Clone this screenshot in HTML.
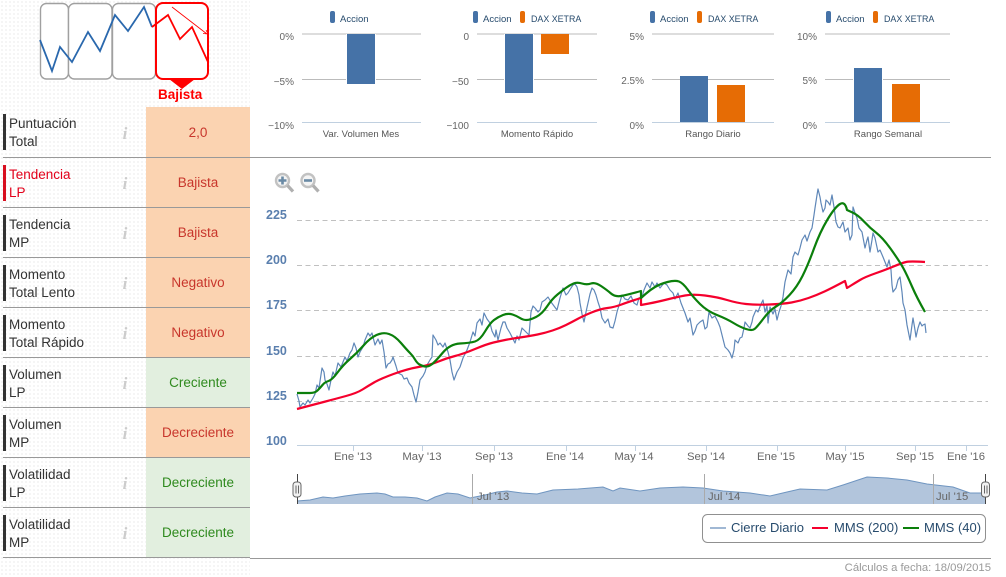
<!DOCTYPE html>
<html lang="es">
<head>
<meta charset="utf-8">
<title>Análisis</title>
<style>
html,body{margin:0;padding:0;background:#fff;width:1006px;height:577px;overflow:hidden}
svg{display:block;position:absolute;left:0;top:0}
text{font-family:"Liberation Sans",sans-serif}
.lab{font-size:13.5px;fill:#333}
.val{font-size:13.5px;text-anchor:middle}
.r{fill:#c8362c}
.g{fill:#2f8a1e}
.inf{font-family:"Liberation Serif",serif;font-style:italic;font-weight:bold;font-size:17px;fill:#ccc;text-anchor:middle}
.ax{font-size:10px;fill:#666;text-anchor:end}
.cat{font-size:9.5px;fill:#555;text-anchor:middle}
.lg{font-size:9.5px;fill:#274b6d}
.dx{font-size:8.9px;fill:#274b6d}
.yl{font-size:12.5px;font-weight:bold;fill:#5a7fae}
.xl{font-size:11.3px;fill:#666;text-anchor:middle}
.nl{font-size:11.3px;fill:#666}
.ll{font-size:13px;fill:#274b6d}
</style>
</head>
<body>
<svg width="1006" height="577" viewBox="0 0 1006 577" xmlns="http://www.w3.org/2000/svg">
<defs>
<pattern id="dots" width="4" height="4" patternUnits="userSpaceOnUse"><rect width="4" height="4" fill="#fff"/><rect x="1" y="1" width="2" height="2" fill="#f5f5f5"/></pattern>
</defs>
<rect x="0" y="0" width="250" height="577" fill="url(#dots)"/>

<!-- top trend icon -->
<g fill="#fff" stroke="#a0a0a0" stroke-width="1.4">
<rect x="40.5" y="3.5" width="28" height="75.5" rx="6"/>
<rect x="68.5" y="3.5" width="43.5" height="75.5" rx="6"/>
<rect x="112.5" y="3.5" width="43" height="75.5" rx="6"/>
</g>
<rect x="156" y="3" width="52" height="76" rx="7" fill="#fff" stroke="#f00" stroke-width="2"/>
<polygon points="169,79 195,79 182,89" fill="#f00"/>
<polyline points="40,40 52,71 60,47 72,62 88,32 100,51 115,15 128,31 144,7 152,27" fill="none" stroke="#2a68ad" stroke-width="1.8"/>
<polyline points="152,27 168,15 180,39 192,27 208,62" fill="none" stroke="#f00" stroke-width="1.8"/>
<path d="M172 7 L207 34 M203 33.5 L208 34 L206 30" fill="none" stroke="#f00" stroke-width="0.8"/>
<text x="158" y="99" font-weight="bold" fill="#f00" style="font-size:13.5px">Bajista</text>

<!-- table -->
<g>
<rect x="146" y="107" width="104" height="50" fill="#fbd3b1"/>
<rect x="146" y="157" width="104" height="50" fill="#fbd3b1"/>
<rect x="146" y="207" width="104" height="50" fill="#fbd3b1"/>
<rect x="146" y="257" width="104" height="50" fill="#fbd3b1"/>
<rect x="146" y="307" width="104" height="50" fill="#fbd3b1"/>
<rect x="146" y="357" width="104" height="50" fill="#e2efdf"/>
<rect x="146" y="407" width="104" height="50" fill="#fbd3b1"/>
<rect x="146" y="457" width="104" height="50" fill="#e2efdf"/>
<rect x="146" y="507" width="104" height="50" fill="#e2efdf"/>
</g>
<g fill="#999">
<rect x="3" y="157" width="247" height="1"/>
<rect x="3" y="207" width="247" height="1"/>
<rect x="3" y="257" width="247" height="1"/>
<rect x="3" y="307" width="247" height="1"/>
<rect x="3" y="357" width="247" height="1"/>
<rect x="3" y="407" width="247" height="1"/>
<rect x="3" y="457" width="247" height="1"/>
<rect x="3" y="507" width="247" height="1"/>
<rect x="3" y="557" width="247" height="1"/>
</g>
<g fill="#333">
<rect x="3" y="114" width="3" height="36"/>
<rect x="3" y="215" width="3" height="36"/>
<rect x="3" y="265" width="3" height="36"/>
<rect x="3" y="315" width="3" height="36"/>
<rect x="3" y="365" width="3" height="36"/>
<rect x="3" y="415" width="3" height="36"/>
<rect x="3" y="465" width="3" height="36"/>
<rect x="3" y="515" width="3" height="36"/>
</g>
<rect x="3" y="165" width="3" height="36" fill="#d80f20"/>

<text class="lab" x="9" y="128">Puntuación</text><text class="lab" x="9" y="146">Total</text>
<text class="lab" x="9" y="179" style="fill:#e2001a">Tendencia</text><text class="lab" x="9" y="197" style="fill:#e2001a">LP</text>
<text class="lab" x="9" y="229">Tendencia</text><text class="lab" x="9" y="247">MP</text>
<text class="lab" x="9" y="279">Momento</text><text class="lab" x="9" y="297">Total Lento</text>
<text class="lab" x="9" y="329">Momento</text><text class="lab" x="9" y="347">Total Rápido</text>
<text class="lab" x="9" y="379">Volumen</text><text class="lab" x="9" y="397">LP</text>
<text class="lab" x="9" y="429">Volumen</text><text class="lab" x="9" y="447">MP</text>
<text class="lab" x="9" y="479">Volatilidad</text><text class="lab" x="9" y="497">LP</text>
<text class="lab" x="9" y="529">Volatilidad</text><text class="lab" x="9" y="547">MP</text>

<text class="inf" x="125" y="139">i</text>
<text class="inf" x="125" y="189">i</text>
<text class="inf" x="125" y="239">i</text>
<text class="inf" x="125" y="289">i</text>
<text class="inf" x="125" y="339">i</text>
<text class="inf" x="125" y="389">i</text>
<text class="inf" x="125" y="439">i</text>
<text class="inf" x="125" y="489">i</text>
<text class="inf" x="125" y="539">i</text>

<text class="val r" x="198" y="137">2,0</text>
<text class="val r" x="198" y="187">Bajista</text>
<text class="val r" x="198" y="237">Bajista</text>
<text class="val r" x="198" y="287">Negativo</text>
<text class="val r" x="198" y="337">Negativo</text>
<text class="val g" x="198" y="387">Creciente</text>
<text class="val r" x="198" y="437">Decreciente</text>
<text class="val g" x="198" y="487">Decreciente</text>
<text class="val g" x="198" y="537">Decreciente</text>

<!-- horizontal rules -->
<rect x="250" y="157" width="741" height="1" fill="#999"/>
<rect x="250" y="558" width="741" height="1" fill="#999"/>

<!-- bar chart 1 -->
<g>
<rect x="302" y="33.5" width="119" height="1" fill="#bbb"/><rect x="302" y="79" width="119" height="1" fill="#bbb"/><rect x="302" y="122" width="119" height="1" fill="#c0d0e0"/>
<rect x="346" y="34" width="30" height="51" fill="#fff"/><rect x="347" y="34" width="28" height="50" fill="#4572a7"/>
<rect x="330" y="11" width="5" height="12" rx="2" fill="#4572a7"/><text class="lg" x="340" y="22">Accion</text>
<text class="ax" x="294" y="40">0%</text><text class="ax" x="294" y="85">−5%</text><text class="ax" x="294" y="129">−10%</text>
<text class="cat" x="361" y="137">Var. Volumen Mes</text>
</g>
<!-- bar chart 2 -->
<g>
<rect x="477" y="33.5" width="120" height="1" fill="#bbb"/><rect x="477" y="79" width="120" height="1" fill="#bbb"/><rect x="477" y="122" width="120" height="1" fill="#c0d0e0"/>
<rect x="504" y="34" width="30" height="60" fill="#fff"/><rect x="505" y="34" width="28" height="59" fill="#4572a7"/>
<rect x="541" y="34" width="28" height="20" fill="#e66c05"/>
<rect x="473" y="11" width="5" height="12" rx="2" fill="#4572a7"/><text class="lg" x="483" y="22">Accion</text>
<rect x="520" y="11" width="5" height="12" rx="2" fill="#e66c05"/><text class="dx" x="531" y="22">DAX XETRA</text>
<text class="ax" x="469" y="40">0</text><text class="ax" x="469" y="85">−50</text><text class="ax" x="469" y="129">−100</text>
<text class="cat" x="537" y="137">Momento Rápido</text>
</g>
<!-- bar chart 3 -->
<g>
<rect x="652" y="33.5" width="122" height="1" fill="#bbb"/><rect x="652" y="79" width="122" height="1" fill="#bbb"/><rect x="652" y="122" width="122" height="1" fill="#c0d0e0"/>
<rect x="680" y="76" width="28" height="46" fill="#4572a7"/>
<rect x="717" y="85" width="28" height="37" fill="#e66c05"/>
<rect x="650" y="11" width="5" height="12" rx="2" fill="#4572a7"/><text class="lg" x="660" y="22">Accion</text>
<rect x="697" y="11" width="5" height="12" rx="2" fill="#e66c05"/><text class="dx" x="708" y="22">DAX XETRA</text>
<text class="ax" x="644" y="40">5%</text><text class="ax" x="644" y="84">2.5%</text><text class="ax" x="644" y="129">0%</text>
<text class="cat" x="713" y="137">Rango Diario</text>
</g>
<!-- bar chart 4 -->
<g>
<rect x="825" y="33.5" width="125" height="1" fill="#bbb"/><rect x="825" y="79" width="125" height="1" fill="#bbb"/><rect x="825" y="122" width="125" height="1" fill="#c0d0e0"/>
<rect x="853" y="67" width="30" height="55" fill="#fff"/><rect x="854" y="68" width="28" height="54" fill="#4572a7"/>
<rect x="892" y="84" width="28" height="38" fill="#e66c05"/>
<rect x="826" y="11" width="5" height="12" rx="2" fill="#4572a7"/><text class="lg" x="836" y="22">Accion</text>
<rect x="873" y="11" width="5" height="12" rx="2" fill="#e66c05"/><text class="dx" x="884" y="22">DAX XETRA</text>
<text class="ax" x="817" y="40">10%</text><text class="ax" x="817" y="84">5%</text><text class="ax" x="817" y="129">0%</text>
<text class="cat" x="888" y="137">Rango Semanal</text>
</g>

<!-- zoom icons -->
<g fill="none">
<circle cx="282.5" cy="180.5" r="6.5" fill="#f4f4f4" stroke="#c2c2c2" stroke-width="2.4"/>
<path d="M287.5 185.5 L293 191.5" stroke="#b0b0b0" stroke-width="3.2"/>
<path d="M278.5 180.5 H286.5 M282.5 176.5 V184.5" stroke="#6a8aa5" stroke-width="2.6"/>
<circle cx="308" cy="180.5" r="6.5" fill="#f4f4f4" stroke="#c2c2c2" stroke-width="2.4"/>
<path d="M313 185.5 L318.5 191.5" stroke="#b0b0b0" stroke-width="3.2"/>
<path d="M304 180.5 H312" stroke="#6a8aa5" stroke-width="2.6"/>
</g>

<!-- main chart grid -->
<g stroke="#c0c0c0" stroke-width="1" stroke-dasharray="5,3.5">
<path d="M297 220.5 H988"/><path d="M297 265.5 H988"/><path d="M297 310.5 H988"/><path d="M297 356.5 H988"/><path d="M297 401.5 H988"/>
</g>
<rect x="297" y="445" width="691" height="1" fill="#c0d0e0"/>
<g fill="#c0d0e0">
<rect x="353" y="446" width="1" height="5"/><rect x="422" y="446" width="1" height="5"/><rect x="494" y="446" width="1" height="5"/><rect x="566" y="446" width="1" height="5"/><rect x="635" y="446" width="1" height="5"/><rect x="706" y="446" width="1" height="5"/><rect x="777" y="446" width="1" height="5"/><rect x="845" y="446" width="1" height="5"/><rect x="915" y="446" width="1" height="5"/><rect x="966" y="446" width="1" height="5"/>
</g>
<text class="yl" x="266" y="219">225</text>
<text class="yl" x="266" y="264">200</text>
<text class="yl" x="266" y="309">175</text>
<text class="yl" x="266" y="355">150</text>
<text class="yl" x="266" y="400">125</text>
<text class="yl" x="266" y="445">100</text>
<text class="xl" x="353" y="460">Ene '13</text>
<text class="xl" x="422" y="460">May '13</text>
<text class="xl" x="494" y="460">Sep '13</text>
<text class="xl" x="565" y="460">Ene '14</text>
<text class="xl" x="634" y="460">May '14</text>
<text class="xl" x="706" y="460">Sep '14</text>
<text class="xl" x="776" y="460">Ene '15</text>
<text class="xl" x="845" y="460">May '15</text>
<text class="xl" x="915" y="460">Sep '15</text>
<text class="xl" x="966" y="460">Ene '16</text>

<!-- series -->
<polyline fill="none" stroke="#5f87b8" stroke-width="1.2" stroke-linejoin="round" points="297,394 299,401 300,407 303,403 305,405 308,400 310,403 313,398 315,394 317,385 319,388 322,368 324,372 325,380 327,384 329,390 331,380 333,372 335,376 338,363 341,367 345,357 347,361 350,353 352,350 354,343 356,348 358,357 360,352 363,347 365,340 368,333 370,336 372,333 374,341 375,345 378,339 380,344 382,340 384,352 386,368 388,364 390,363 392,360 393,357 396,366 398,373 402,375 404,379 407,378 409,383 412,387 414,395 416,402 418,392 420,380 423,376 425,372 427,365 430,360 432,357 433,335 436,340 438,345 440,343 443,347 445,343 448,352 450,360 452,372 454,380 457,372 460,367 463,358 467,350 470,342 473,332 475,336 477,323 480,319 482,325 484,313 487,319 490,323 492,331 495,337 496,330 498,340 501,328 503,322 505,322 507,328 510,333 512,337 515,343 517,336 519,340 522,328 525,331 529,335 531,312 533,306 535,308 538,312 540,310 542,302 545,300 548,297 551,302 554,306 557,310 560,298 563,288 566,295 568,293 571,288 573,285 575,284 577,287 579,295 580,303 582,314 584,322 586,312 588,303 590,294 592,288 594,290 596,295 598,302 600,308 602,318 605,323 608,319 610,327 613,328 615,321 617,312 620,302 622,295 625,299 628,300 631,296 634,303 637,305 639,298 642,297 644,290 647,283 650,288 652,282 655,287 657,283 660,288 664,283 667,285 670,290 673,293 675,299 678,293 681,303 685,313 688,322 690,318 693,335 695,331 697,325 700,322 703,320 705,329 707,327 709,312 712,318 715,316 718,322 720,327 722,335 725,347 728,350 730,353 732,358 734,350 735,340 738,343 740,338 742,337 744,328 745,322 748,326 750,328 752,322 753,317 756,310 758,312 761,304 763,300 765,312 767,306 768,323 770,307 773,314 775,309 777,320 779,312 781,306 783,297 785,282 788,270 791,274 793,257 795,252 798,255 800,248 802,240 805,235 807,241 810,232 812,228 814,215 815,208 817,195 818,189 820,197 821,203 823,212 825,208 826,200 828,202 830,205 832,195 834,207 836,222 838,227 840,228 843,222 845,232 848,228 850,240 852,235 853,207 855,213 857,218 859,228 862,232 865,248 867,240 868,237 870,252 872,240 873,233 875,238 878,252 880,250 883,257 885,262 887,267 889,260 891,270 892,285 893,292 896,288 898,280 900,277 902,292 903,303 905,310 907,325 910,340 912,325 913,318 915,330 916,337 918,328 920,322 922,326 923,325 925,324 926,333"/>
<path fill="none" stroke="#f5002d" stroke-width="2.2" stroke-linejoin="round" d="M297 409 L306.5 406.5 Q316 404 325.5 401.5 Q335 399 346 396 Q357 393 362.5 389.5 Q368 386 374 382.5 Q380 379 393.5 374 Q407 369 418.5 367 Q430 365 438.5 361.5 Q447 358 455 356 Q463 354 475 349 Q487 344 493.5 342.5 Q500 341 505 340 Q510 339 520 337.5 Q530 336 537.5 334.5 Q545 333 552.5 330.5 Q560 328 566 325 Q572 322 577.5 319 Q583 316 591.5 312.5 Q600 309 607.5 308 Q615 307 621.5 304.5 Q628 302 641 298 L641 305 L649 303.5 Q657 302 667 299.5 Q677 297 685 295.5 Q693 294 705 295.5 Q717 297 727 300 Q737 303 746 304 Q755 305 769 304.5 Q783 304 791.5 302.5 Q800 301 808.5 298 Q817 295 824.5 291.5 Q832 288 845 281 L847 288 L851 285.5 Q855 283 860 280 Q865 277 875 273.5 Q885 270 893.5 266.5 Q902 263 906 262 Q910 261 925 262"/>
<path fill="none" stroke="#0b7f0b" stroke-width="2.2" stroke-linejoin="round" d="M297 393 L310 393 Q315 393 317.5 390.5 Q320 388 322.5 385 Q325 382 328.5 381 Q332 380 337.5 372.5 Q343 365 350 359 Q357 353 363.5 345.5 Q370 338 376.5 335 Q383 332 389 334 Q395 336 401 343 Q407 350 410 353 Q413 356 415 359.5 Q417 363 419.5 364.5 Q422 366 425 366.5 Q428 367 431.5 364.5 Q435 362 442.5 353 Q450 344 460 343.5 Q470 343 475 341.5 Q480 340 485 331.5 Q490 323 494 320 Q498 317 503 315 Q508 313 512.5 314.5 Q517 316 520 318 Q523 320 526.5 320 Q530 320 536 317 Q542 314 547 306.5 Q552 299 557.5 294.5 Q563 290 566.5 287.5 Q570 285 573.5 283.5 Q577 282 582 283.5 Q587 285 591 283.5 Q595 282 601 286 Q607 290 611 293.5 Q615 297 621 296 Q627 295 641 291 L641 298 L645.5 294 Q650 290 655 287 Q660 284 667.5 282 Q675 280 679 281.5 Q683 283 688 290 Q693 297 700 304 Q707 311 717 315 Q727 319 733.5 323 Q740 327 746 329 Q752 331 754.5 329 Q757 327 763.5 318.5 Q770 310 776 306.5 Q782 303 789.5 295 Q797 287 802.5 276 Q808 265 814 248.5 Q820 232 827.5 219.5 Q835 207 840 204 Q845 201 847 210 L852.5 212.5 Q858 215 864 221.5 Q870 228 876.5 233 Q883 238 891.5 250 Q900 262 903.5 268.5 Q907 275 912 286.5 Q917 298 925 312"/>

<!-- navigator -->
<polygon fill="#b2c5dc" points="297,504 297,501 310,500 323,497 333,498 345,496 360,494 377,493 385,494 393,497 405,497 417,498 427,501 435,497 447,493 458,494 470,498 485,495 497,492 507,491 522,493 537,494 553,490 578,489 603,487 613,491 620,488 640,491 660,488 683,487 703,488 723,491 750,493 770,496 787,492 800,489 827,490 843,485 855,481 867,477 887,478 907,480 927,484 953,487 970,493 983,493 985,490 985,504"/>
<polyline fill="none" stroke="#6f95c0" stroke-width="1" points="297,501 310,500 323,497 333,498 345,496 360,494 377,493 385,494 393,497 405,497 417,498 427,501 435,497 447,493 458,494 470,498 485,495 497,492 507,491 522,493 537,494 553,490 578,489 603,487 613,491 620,488 640,491 660,488 683,487 703,488 723,491 750,493 770,496 787,492 800,489 827,490 843,485 855,481 867,477 887,478 907,480 927,484 953,487 970,493 983,493 985,490"/>
<g fill="#aaa"><rect x="472" y="474" width="1" height="30"/><rect x="704" y="474" width="1" height="30"/><rect x="933" y="474" width="1" height="30"/></g>
<text class="nl" x="477" y="500">Jul '13</text>
<text class="nl" x="708" y="500">Jul '14</text>
<text class="nl" x="936" y="500">Jul '15</text>
<g>
<rect x="297" y="474" width="1" height="30" fill="#444"/>
<rect x="293" y="482" width="8" height="15" rx="3" fill="#f2f2f2" stroke="#666" stroke-width="1"/>
<path d="M296 485.5 V493.5 M298.5 485.5 V493.5" stroke="#666" stroke-width="1" fill="none"/>
<rect x="985" y="474" width="1" height="30" fill="#444"/>
<rect x="981.5" y="482" width="8" height="15" rx="3" fill="#f2f2f2" stroke="#666" stroke-width="1"/>
<path d="M984.5 485.5 V493.5 M987 485.5 V493.5" stroke="#666" stroke-width="1" fill="none"/>
</g>

<!-- legend -->
<rect x="702.5" y="514.5" width="283" height="28" rx="5" fill="#fff" stroke="#909090" stroke-width="1"/>
<rect x="710" y="527" width="16" height="2" fill="#a0b8d4"/>
<text class="ll" x="731" y="532">Cierre Diario</text>
<rect x="812" y="527" width="16" height="2" fill="#f5002d"/>
<text class="ll" x="834" y="532">MMS (200)</text>
<rect x="903" y="527" width="16" height="2" fill="#0b7f0b"/>
<text class="ll" x="924" y="532">MMS (40)</text>

<text x="991" y="571" text-anchor="end" style="font-size:11.3px;fill:#999">Cálculos a fecha: 18/09/2015</text>
</svg>
</body>
</html>
